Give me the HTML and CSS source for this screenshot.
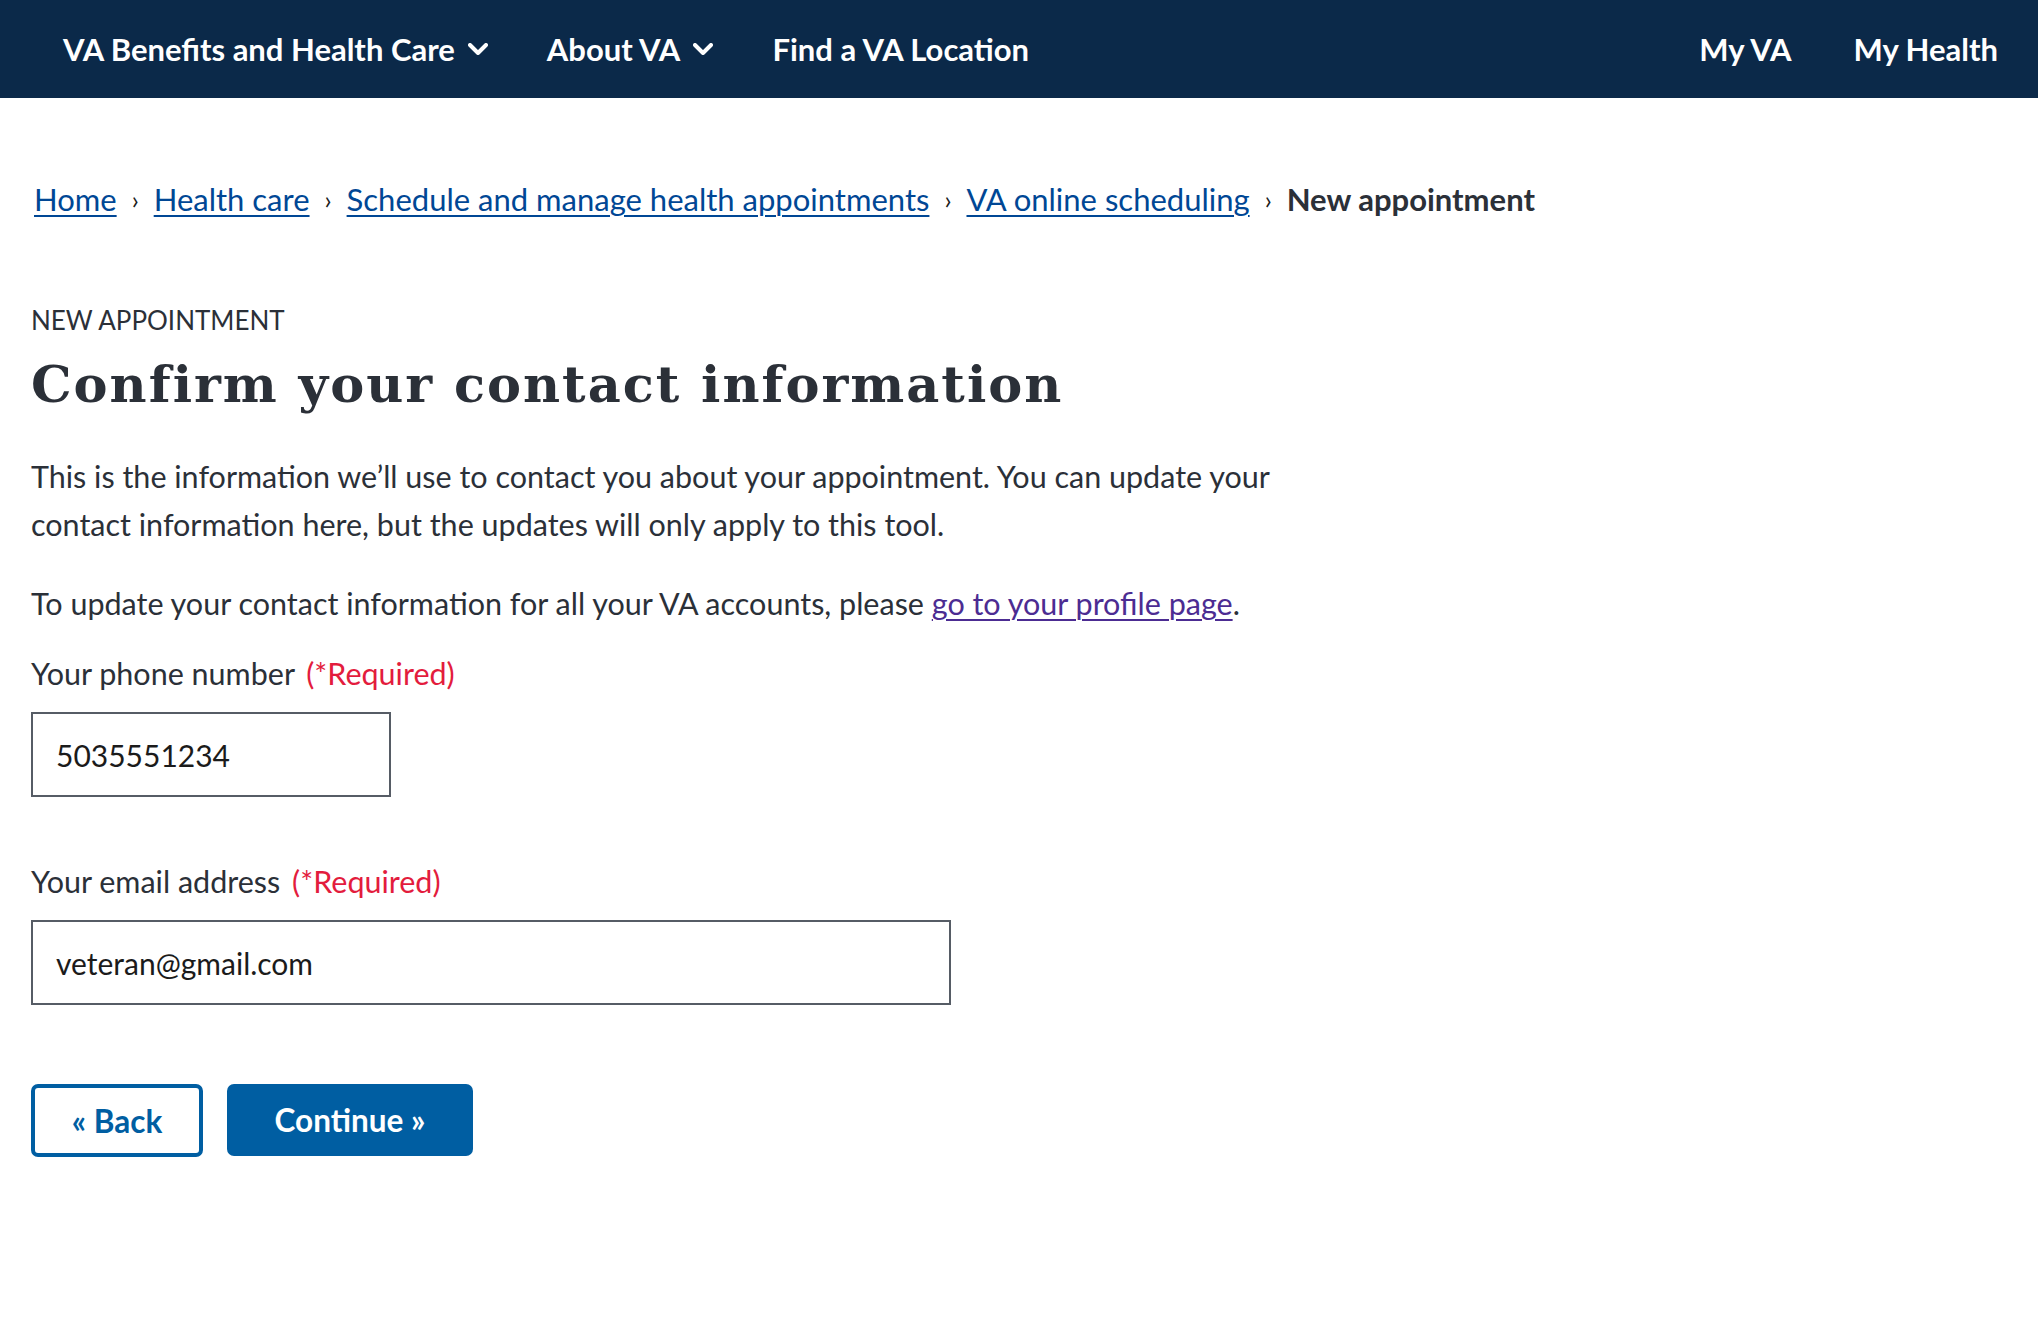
FILE: index.html
```html
<!DOCTYPE html>
<html lang="en">
<head>
<meta charset="utf-8">
<title>Confirm your contact information</title>
<link rel="stylesheet" href="styles.css">
</head>
<body>
<header class="topnav">
  <nav class="nav-group">
    <span class="nav-item">VA Benefits and Health Care
      <svg class="chev" width="20" height="12" viewBox="0 0 20 12"><polyline points="2,2 10,10 18,2" fill="none" stroke="#fff" stroke-width="4" stroke-linecap="round" stroke-linejoin="round"/></svg>
    </span>
    <span class="nav-item">About VA
      <svg class="chev" width="20" height="12" viewBox="0 0 20 12"><polyline points="2,2 10,10 18,2" fill="none" stroke="#fff" stroke-width="4" stroke-linecap="round" stroke-linejoin="round"/></svg>
    </span>
    <span class="nav-item">Find a VA Location</span>
  </nav>
  <nav class="nav-group right">
    <span class="nav-item">My VA</span>
    <span class="nav-item">My Health</span>
  </nav>
</header>
<main class="content">
  <ol class="breadcrumb">
    <li><a href="#">Home</a></li>
    <li class="sep">›</li>
    <li><a href="#">Health care</a></li>
    <li class="sep">›</li>
    <li><a href="#">Schedule and manage health appointments</a></li>
    <li class="sep">›</li>
    <li><a href="#">VA online scheduling</a></li>
    <li class="sep">›</li>
    <li class="current">New appointment</li>
  </ol>
  <p class="eyebrow">NEW APPOINTMENT</p>
  <h1 class="title">Confirm your contact information</h1>
  <p class="intro">This is the information we’ll use to contact you about your appointment. You can update your contact information here, but the updates will only apply to this tool.</p>
  <p class="intro second">To update your contact information for all your VA accounts, please <a class="visited" href="#">go to your profile page</a>.</p>
  <label class="field-label">Your phone number <span class="req">(*Required)</span></label>
  <div class="input phone">5035551234</div>
  <label class="field-label email-label">Your email address <span class="req">(*Required)</span></label>
  <div class="input email">veteran@gmail.com</div>
  <div class="actions">
    <button class="btn btn-outline">« Back</button>
    <button class="btn btn-primary">Continue »</button>
  </div>
</main>
</body>
</html>
```
FILE: styles.css
```css
* { box-sizing: border-box; }
body {
  margin: 0;
  font-family: Lato, "Source Sans Pro", sans-serif;
  color: #1b1b1b;
  background: #fff;
}
.topnav {
  background: #0b2949;
  height: 98px;
  display: flex;
  align-items: center;
  justify-content: space-between;
  padding: 0 40px 0 63px;
}
.nav-group {
  display: flex;
  align-items: center;
  gap: 59px;
}
.nav-group.right { gap: 62px; }
.nav-item {
  color: #fff;
  font-weight: 700;
  font-size: 31px;
  display: flex;
  align-items: center;
  gap: 13px;
}
.chev { display: block; }
.content {
  padding: 0 31px;
}
.breadcrumb {
  list-style: none;
  margin: 0;
  padding: 81px 0 0 3px;
  display: flex;
  align-items: center;
  gap: 15px;
  font-size: 31px;
  line-height: 40px;
}
.breadcrumb a {
  color: #004795;
  text-decoration: underline;
  text-decoration-thickness: 2px;
  text-underline-offset: 4px;
}
.breadcrumb .sep { color: #1b1b1b; font-size: 25px; }
.breadcrumb .current { font-weight: 700; color: #2b3038; }
.eyebrow {
  margin: 83px 0 0;
  font-size: 26px;
  line-height: 36px;
  color: #2b3038;
}
.title {
  margin: 16px 0 0;
  font-family: "DejaVu Serif", serif;
  font-weight: 700;
  font-size: 51px;
  letter-spacing: 2px;
  line-height: 60px;
  color: #2b3038;
}
.intro {
  margin: 38px 0 0;
  font-size: 30.5px;
  line-height: 48px;
  color: #2b3038;
  max-width: 1285px;
}
.intro.second { margin-top: 31px; }
.visited {
  color: #4c2c92;
  text-decoration-thickness: 2px;
  text-underline-offset: 4px;
}
.field-label {
  display: block;
  margin-top: 22px;
  font-size: 30.5px;
  line-height: 48px;
  color: #2b3038;
}
.req { color: #e31c3d; margin-left: 4px; }
.input {
  margin-top: 15px;
  height: 85px;
  border: 2px solid #565c65;
  padding: 0 0 0 23px;
  display: flex;
  align-items: center;
  font-size: 30px;
  color: #1b1b1b;
}
.phone { width: 360px; }
.email { width: 920px; }
.email-label { margin-top: 60px; }
.actions {
  margin-top: 79px;
  display: flex;
  gap: 24px;
}
.btn {
  font-family: Lato, sans-serif;
  font-weight: 700;
  font-size: 31.5px;
  border-radius: 7px;
  height: 73px;
  cursor: pointer;
  padding: 0;
}
.btn-outline {
  width: 172px;
  background: #fff;
  color: #005ea2;
  border: 4px solid #005ea2;
}
.btn-primary {
  width: 246px;
  height: 72px;
  background: #005ea2;
  color: #fff;
  border: none;
}
```
